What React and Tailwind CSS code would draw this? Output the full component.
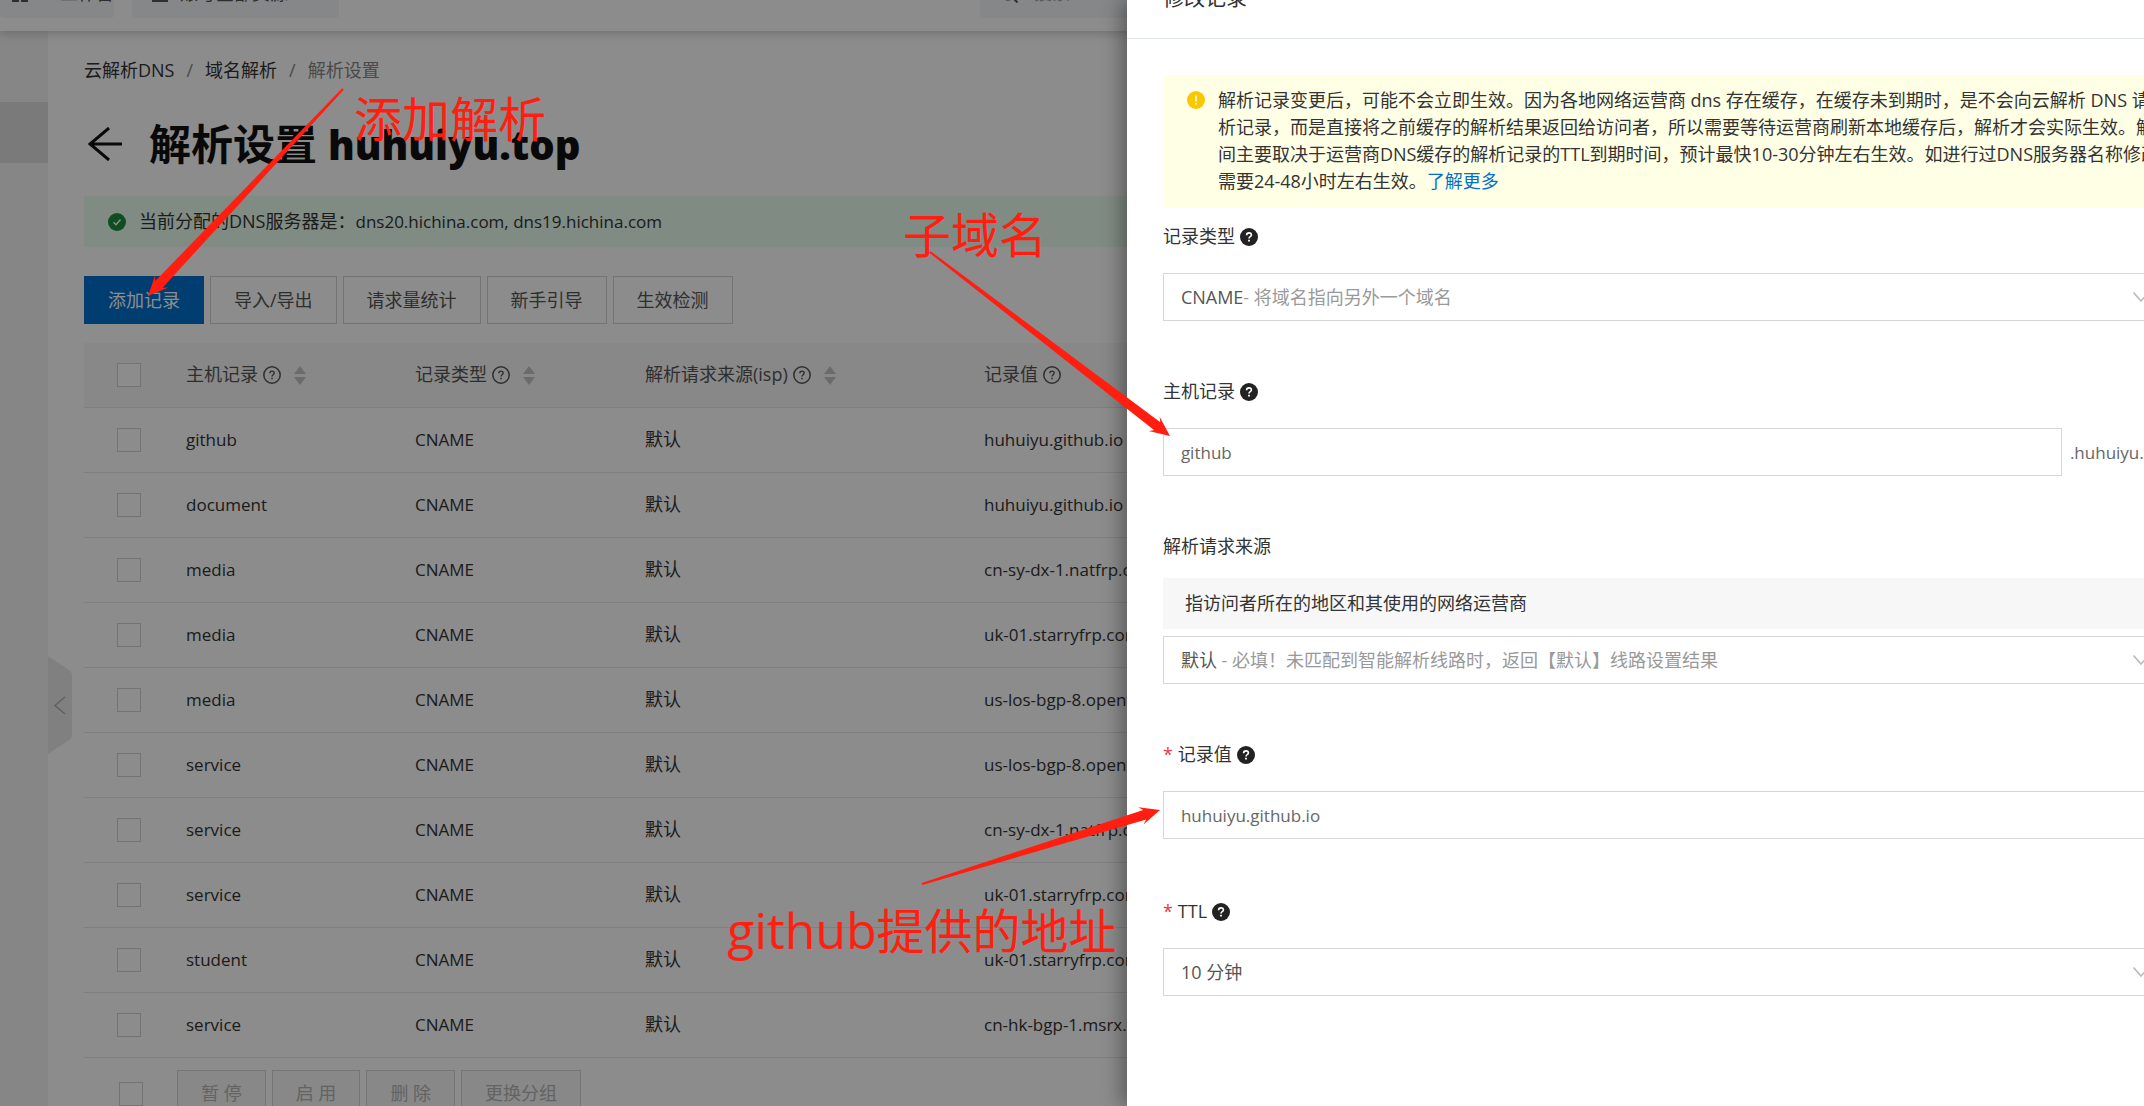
import React from "react";

const RECORDS = [
  ["github", "huhuiyu.github.io"],
  ["document", "huhuiyu.github.io"],
  ["media", "cn-sy-dx-1.natfrp.cloud"],
  ["media", "uk-01.starryfrp.com"],
  ["media", "us-los-bgp-8.openfrp.top"],
  ["service", "us-los-bgp-8.openfrp.top"],
  ["service", "cn-sy-dx-1.natfrp.cloud"],
  ["service", "uk-01.starryfrp.com"],
  ["student", "uk-01.starryfrp.com"],
  ["service", "cn-hk-bgp-1.msrx.top"],
];

function HelpOutline() {
  return (
    <svg viewBox="0 0 18 18" className="size-[18px] shrink-0" fill="none" stroke="currentColor" aria-hidden="true">
      <circle cx="9" cy="9" r="8.2" strokeWidth="1.5" />
      <path d="M6.8 7.3c0-1.4 1-2.2 2.2-2.2s2.2.8 2.2 2c0 1.6-2.2 1.7-2.2 3.4" strokeWidth="1.4" />
      <path d="M9 11.8v1.5" strokeWidth="1.5" />
    </svg>
  );
}

function HelpSolid() {
  return (
    <svg viewBox="0 0 18 18" className="size-[18px] shrink-0" fill="none" aria-hidden="true">
      <circle cx="9" cy="9" r="9" fill="#222" />
      <path d="M6.6 7.2c0-1.4 1-2.3 2.4-2.3s2.4.9 2.4 2.1c0 1.7-2.4 1.7-2.4 3.5" stroke="#fff" strokeWidth="1.6" />
      <path d="M9 11.8v1.8" stroke="#fff" strokeWidth="1.8" />
    </svg>
  );
}

function Sorter() {
  return (
    <svg viewBox="0 0 12 20" className="ml-2 h-5 w-3 shrink-0 fill-[#c4c4c4]" aria-hidden="true">
      <path d="M6 1l6 8H0z" />
      <path d="M6 20l6-8H0z" />
    </svg>
  );
}

function Check({ label }) {
  return (
    <input
      type="checkbox"
      aria-label={label}
      className="block size-6 shrink-0 appearance-none border border-[#d2d2d2] bg-white"
    />
  );
}

function HeadCell({ text, sort }) {
  return (
    <th className="px-6 text-left font-normal">
      <span className="flex items-center gap-[5px]">
        {text}
        <HelpOutline />
        {sort && <Sorter />}
      </span>
    </th>
  );
}

function ToolButton({ children, primary, disabled }) {
  const base = "h-12 whitespace-nowrap border px-[23px] ";
  const look = primary
    ? "border-[#0070cc] bg-[#0070cc] text-white"
    : disabled
      ? "border-[#d5d5d5] bg-[#f7f7f7] text-[#b5b5b5]"
      : "border-[#d2d2d2] bg-white text-[#555]";
  return (
    <button type="button" disabled={disabled} className={base + look}>
      {children}
    </button>
  );
}

function FieldLabel({ htmlFor, text, required, help = true }) {
  return (
    <label htmlFor={htmlFor} className="flex h-[27px] items-center gap-[5px] text-[#333]">
      <span>
        {required && <span className="mr-[5px] text-[#e63c3c]">*</span>}
        {text}
      </span>
      {help && <HelpSolid />}
    </label>
  );
}

function SelectBox({ id, value, hint }) {
  return (
    <div className="grid h-12 items-center border border-[#d6d6d6] bg-white">
      <select
        id={id}
        className="col-start-1 row-start-1 h-full w-full appearance-none bg-transparent px-[17px] text-transparent outline-none"
      >
        <option>{value}</option>
      </select>
      <span className="pointer-events-none col-start-1 row-start-1 px-[17px] text-[#555]" aria-hidden="true">
        {value}
        {hint && <span className="text-[#999]">{hint}</span>}
      </span>
      <svg
        viewBox="0 0 16 10"
        className="pointer-events-none col-start-1 row-start-1 mr-3 h-[10px] w-4 justify-self-end"
        fill="none"
        stroke="#bbb"
        strokeWidth="1.6"
        aria-hidden="true"
      >
        <path d="M0.6 0.6L8 9L15.4 0.6" />
      </svg>
    </div>
  );
}

const INPUT = "h-12 min-w-0 flex-1 border border-[#d6d6d6] bg-white px-[17px] text-[17px] text-[#666] outline-none";

function Arrow({ from, to }) {
  const [x1, y1] = from;
  const [x2, y2] = to;
  const len = Math.hypot(x2 - x1, y2 - y1);
  const dx = (x2 - x1) / len;
  const dy = (y2 - y1) / len;
  const at = (back, side) => `${x2 - dx * back - dy * side},${y2 - dy * back + dx * side}`;
  const points = [at(len, 1), at(16, 5), at(20, 9), at(0, 0), at(20, -9), at(16, -5), at(len, -1)];
  return <polygon points={points.join(" ")} />;
}

export default function App() {
  return (
    <div className="relative flex h-screen flex-col overflow-hidden bg-white font-['Open_Sans','Noto_Sans_CJK_SC',sans-serif] text-[18px] leading-[27px] text-[#333]">
      <header className="z-10 -mt-11 flex h-[75px] shrink-0 items-center bg-white text-[#555] shadow-[0_2px_10px_rgba(0,0,0,0.22)]">
        <button type="button" className="flex h-12 w-[114px] shrink-0 items-center gap-8 rounded bg-[#f4f6f9] pl-3">
          <svg viewBox="0 0 16 16" className="size-4 shrink-0" fill="currentColor" aria-hidden="true">
            <path d="M0 0h7v7H0zM9 0h7v7H9zM0 9h7v7H0zM9 9h7v7H9z" />
          </svg>
          <span className="whitespace-nowrap">工作台</span>
        </button>
        <button type="button" className="ml-[18px] flex h-12 w-[207px] shrink-0 items-center gap-3 rounded bg-[#f4f6f9] pl-5">
          <svg viewBox="0 0 16 16" className="size-4 shrink-0" fill="none" stroke="currentColor" strokeWidth="2" aria-hidden="true">
            <path d="M1 3h14v12H1zM5 3V1h6v2" />
          </svg>
          <span className="whitespace-nowrap">账号全部资源</span>
        </button>
        <label className="ml-[641px] flex h-12 flex-1 items-center gap-4 rounded bg-[#f4f6f9] pl-5">
          <svg viewBox="0 0 18 18" className="size-[18px] shrink-0" fill="none" stroke="currentColor" strokeWidth="2" aria-hidden="true">
            <circle cx="8" cy="8" r="6.5" />
            <path d="M13 13l4.5 4.5" />
          </svg>
          <input type="search" placeholder="搜索..." aria-label="搜索" className="w-full bg-transparent outline-none" />
        </label>
      </header>

      <div className="flex min-h-0 flex-1">
        <nav className="w-12 shrink-0 bg-[#f4f4f4] pt-[71px]" aria-label="侧边栏">
          <div className="h-[61px] bg-[#dedede]" />
        </nav>
        <div className="flex w-9 shrink-0 flex-col pt-[625px]">
          <button type="button" aria-label="收起" className="w-6">
            <svg viewBox="0 0 24 98" className="h-[98px] w-6" aria-hidden="true">
              <path d="M0 0L21 14Q24 16 24 19V79Q24 82 21 84L0 98z" fill="#e9e9e9" />
              <path d="M17 41L7 49.500L17 58" fill="none" stroke="#b0b0b0" strokeWidth="1.6" />
            </svg>
          </button>
        </div>

        <main className="min-w-0 flex-1 pt-[26px]">
          <nav className="flex gap-3" aria-label="面包屑">
            <a href="#dns">云解析DNS</a>
            <span className="text-[#888]">/</span>
            <a href="#domains">域名解析</a>
            <span className="text-[#888]">/</span>
            <span className="text-[#888]">解析设置</span>
          </nav>

          <div className="mt-8 flex h-14 items-center gap-[27px] pl-1">
            <a href="#back" aria-label="返回">
              <svg viewBox="0 0 34 34" className="size-[34px]" fill="none" stroke="#111" strokeWidth="3" aria-hidden="true">
                <path d="M34 17H2M21 1L2 17L21 33" />
              </svg>
            </a>
            <h1 className="whitespace-nowrap text-[42px] leading-14 font-bold text-[#111]">
              解析设置 <span className="text-[40px] font-extrabold">huhuiyu.top</span>
            </h1>
          </div>

          <div className="mt-6 flex h-[51px] items-center gap-[13px] bg-[#e9fdee] pl-6">
            <svg viewBox="0 0 18 18" className="size-[18px]" fill="none" aria-hidden="true">
              <circle cx="9" cy="9" r="9" fill="#1e8e3e" />
              <path d="M5.500 9.200L8 11.700L12.500 6.500" stroke="#fff" strokeWidth="1.5" />
            </svg>
            <span>
              当前分配的DNS服务器是：<span className="text-[17px]">dns20.hichina.com, dns19.hichina.com</span>
            </span>
          </div>

          <div className="mt-[29px] flex gap-[6px]">
            <ToolButton primary>添加记录</ToolButton>
            <ToolButton>导入/导出</ToolButton>
            <ToolButton>请求量统计</ToolButton>
            <ToolButton>新手引导</ToolButton>
            <ToolButton>生效检测</ToolButton>
          </div>

          <table className="mt-[19px] w-full table-fixed border-collapse">
            <colgroup>
              <col className="w-[78px]" />
              <col className="w-[229px]" />
              <col className="w-[230px]" />
              <col className="w-[339px]" />
              <col />
            </colgroup>
            <thead>
              <tr className="h-16 border-b border-[#e3e7ed] bg-[#f7f7f7] text-[#555]">
                <th className="pl-[33px]">
                  <Check label="全选" />
                </th>
                <HeadCell text="主机记录" sort />
                <HeadCell text="记录类型" sort />
                <HeadCell text="解析请求来源(isp)" sort />
                <HeadCell text="记录值" />
              </tr>
            </thead>
            <tbody>
              {RECORDS.map(([host, value], i) => (
                <tr key={i} className="h-[65px] border-b border-[#e3e7ed] text-[17px]">
                  <td className="pl-[33px]">
                    <Check label={`${host} ${i + 1}`} />
                  </td>
                  <td className="px-6">{host}</td>
                  <td className="px-6">CNAME</td>
                  <td className="px-6 text-[18px]">默认</td>
                  <td className="px-6 whitespace-nowrap">{value}</td>
                </tr>
              ))}
            </tbody>
          </table>

          <div className="flex items-center gap-[6px] pt-3 pl-[35px]">
            <div className="mr-7">
              <Check label="选择全部记录" />
            </div>
            <ToolButton disabled>暂 停</ToolButton>
            <ToolButton disabled>启 用</ToolButton>
            <ToolButton disabled>删 除</ToolButton>
            <ToolButton disabled>更换分组</ToolButton>
          </div>
        </main>
      </div>

      {/* Modal mask and the edit drawer */}
      <div className="absolute inset-0 z-20 flex justify-end overflow-hidden bg-black/45">
        <aside className="w-[47.44%] overflow-hidden bg-white shadow-[-6px_0_18px_rgba(0,0,0,0.35)]" role="dialog" aria-label="修改记录">
          <div className="-mt-[43px] flex h-[82px] items-center border-b border-[#e3e8ed] px-9">
            <h2 className="text-[21px]">修改记录</h2>
          </div>
          <form className="min-w-[1071px] px-9 pt-9">
            <div className="flex gap-[13px] bg-[#ffffe6] py-3 pl-6">
              <svg viewBox="0 0 18 18" className="mt-1 size-[18px] shrink-0" fill="none" aria-hidden="true">
                <circle cx="9" cy="9" r="9" fill="#fac800" />
                <path d="M9 4.500V10.500M9 12V13.800" stroke="#fff" strokeWidth="1.5" />
              </svg>
              <p className="whitespace-nowrap">
                解析记录变更后，可能不会立即生效。因为各地网络运营商 dns 存在缓存，在缓存未到期时，是不会向云解析 DNS 请求解
                <br />
                析记录，而是直接将之前缓存的解析结果返回给访问者，所以需要等待运营商刷新本地缓存后，解析才会实际生效。解析生效时
                <br />
                间主要取决于运营商DNS缓存的解析记录的TTL到期时间，预计最快10-30分钟左右生效。如进行过DNS服务器名称修改，则
                <br />
                需要24-48小时左右生效。
                <a href="#more" className="text-[#0070cc]">
                  了解更多
                </a>
              </p>
            </div>

            <div className="mt-4 flex flex-col gap-[57px]">
              <div className="flex flex-col gap-[23px]">
                <FieldLabel htmlFor="type" text="记录类型" />
                <SelectBox id="type" value="CNAME" hint="- 将域名指向另外一个域名" />
              </div>

              <div className="flex flex-col gap-[23px]">
                <FieldLabel htmlFor="host" text="主机记录" />
                <div className="flex items-center gap-2">
                  <input id="host" type="text" defaultValue="github" className={INPUT} />
                  <span className="w-[92px] text-[17px] text-[#666]">.huhuiyu.top</span>
                </div>
              </div>

              <div className="flex flex-col">
                <FieldLabel htmlFor="line" text="解析请求来源" help={false} />
                <p className="mt-[18px] mb-[7px] bg-[#f7f7f7] py-3 pl-[22px]">指访问者所在的地区和其使用的网络运营商</p>
                <SelectBox id="line" value="默认" hint=" - 必填！未匹配到智能解析线路时，返回【默认】线路设置结果" />
              </div>

              <div className="flex flex-col gap-[23px] pb-0.5">
                <FieldLabel htmlFor="value" text="记录值" required />
                <div className="flex">
                  <input id="value" type="text" defaultValue="huhuiyu.github.io" className={INPUT} />
                </div>
              </div>

              <div className="flex flex-col gap-[23px]">
                <FieldLabel htmlFor="ttl" text="TTL" required />
                <SelectBox id="ttl" value="10 分钟" />
              </div>
            </div>
          </form>
        </aside>
      </div>

      {/* Red hand-placed annotations */}
      <div className="pointer-events-none absolute inset-0 z-30 text-[48px] leading-[60px] whitespace-nowrap text-[#ff1e10]">
        <svg className="absolute inset-0 h-full w-full fill-[#ff1e10]" aria-hidden="true">
          <Arrow from={[343, 89]} to={[148, 296]} />
          <Arrow from={[930, 252]} to={[1170, 436]} />
          <Arrow from={[922, 884]} to={[1160, 810]} />
        </svg>
        <span className="absolute top-[89px] left-[354px]">添加解析</span>
        <span className="absolute top-[205px] left-[903px]">子域名</span>
        <span className="absolute top-[900px] left-[727px]">
          <span className="text-[50px]">github</span>提供的地址
        </span>
      </div>
    </div>
  );
}
